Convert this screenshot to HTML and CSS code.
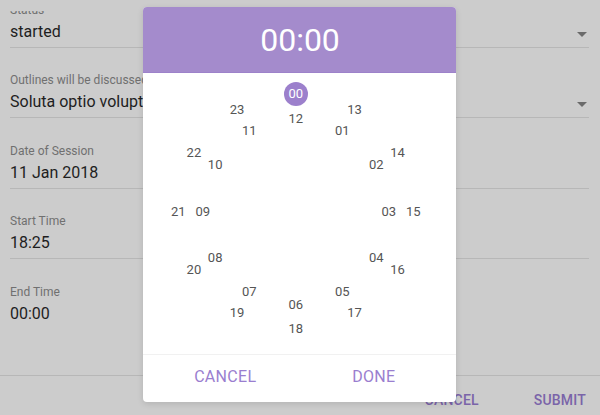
FILE: index.html
```html
<!DOCTYPE html>
<html>
<head>
<meta charset="utf-8">
<link rel="stylesheet" href="styles.css">
</head>
<body>
<div class="page">
  <div class="form-clip">
    <div class="form">
      <div class="field select">
        <div class="label">Status</div>
        <div class="value">started</div>
        <span class="arrow"></span>
      </div>
      <div class="field select">
        <div class="label">Outlines will be discussed</div>
        <div class="value">Soluta optio voluptatem</div>
        <span class="arrow"></span>
      </div>
      <div class="field">
        <div class="label">Date of Session</div>
        <div class="value">11 Jan 2018</div>
      </div>
      <div class="field">
        <div class="label">Start Time</div>
        <div class="value">18:25</div>
      </div>
      <div class="field">
        <div class="label">End Time</div>
        <div class="value">00:00</div>
      </div>
    </div>
  </div>
  <div class="footer">
    <button class="fbtn">Cancel</button>
    <button class="fbtn">Submit</button>
  </div>
</div>

<div class="dialog">
  <div class="dialog-head">00:00</div>
  <div class="dialog-body">
    <div class="clock">
      <span class="num sel" style="left:130px;top:12.5px">00</span>
      <span class="num" style="left:188.75px;top:28.24px">13</span>
      <span class="num" style="left:231.76px;top:71.25px">14</span>
      <span class="num" style="left:247.5px;top:130px">15</span>
      <span class="num" style="left:231.76px;top:188.75px">16</span>
      <span class="num" style="left:188.75px;top:231.76px">17</span>
      <span class="num" style="left:130px;top:247.5px">18</span>
      <span class="num" style="left:71.25px;top:231.76px">19</span>
      <span class="num" style="left:28.24px;top:188.75px">20</span>
      <span class="num" style="left:12.5px;top:130px">21</span>
      <span class="num" style="left:28.24px;top:71.25px">22</span>
      <span class="num" style="left:71.25px;top:28.24px">23</span>
      <span class="num" style="left:130px;top:37px">12</span>
      <span class="num" style="left:176.5px;top:49.46px">01</span>
      <span class="num" style="left:210.54px;top:83.5px">02</span>
      <span class="num" style="left:223px;top:130px">03</span>
      <span class="num" style="left:210.54px;top:176.5px">04</span>
      <span class="num" style="left:176.5px;top:210.54px">05</span>
      <span class="num" style="left:130px;top:223px">06</span>
      <span class="num" style="left:83.5px;top:210.54px">07</span>
      <span class="num" style="left:49.46px;top:176.5px">08</span>
      <span class="num" style="left:37px;top:130px">09</span>
      <span class="num" style="left:49.46px;top:83.5px">10</span>
      <span class="num" style="left:83.5px;top:49.46px">11</span>
    </div>
  </div>
  <div class="dialog-actions">
    <button class="dbtn">Cancel</button>
    <button class="dbtn">Done</button>
  </div>
</div>
</body>
</html>
```

FILE: styles.css
```css
* { box-sizing: border-box; }
html, body {
  margin: 0;
  padding: 0;
  width: 600px;
  height: 415px;
  overflow: hidden;
  background: #cccccc;
  font-family: Roboto, "Liberation Sans", Arial, sans-serif;
}
.page {
  width: 600px;
  height: 415px;
  display: flex;
  flex-direction: column;
}
.form-clip {
  margin-top: 11px;
  overflow: hidden;
  height: 317px;
}
.form {
  margin-top: -33px;
  padding: 0 11px 0 10px;
}
.field {
  position: relative;
  padding: 25px 0 5px;
  border-bottom: 1px solid #b7b7b7;
}
.field + .field + .field {
  padding-top: 25.5px;
}
.label {
  font-size: 12px;
  line-height: 14px;
  color: #707070;
  white-space: nowrap;
}
.value {
  margin-top: 5px;
  font-size: 16px;
  line-height: 20px;
  color: #1e1e1e;
  white-space: nowrap;
}
.arrow {
  position: absolute;
  right: 2px;
  top: 54px;
  width: 0;
  height: 0;
  border-left: 5px solid transparent;
  border-right: 5px solid transparent;
  border-top: 5px solid #6a6a6a;
}
.footer {
  margin-top: 47px;
  border-top: 1px solid #b7b7b7;
  display: flex;
  justify-content: flex-end;
  gap: 55px;
  padding: 14px 14px 0 0;
}
.fbtn {
  background: none;
  border: 0;
  padding: 0;
  font-family: Roboto, "Liberation Sans", Arial, sans-serif;
  font-size: 14px;
  font-weight: 500;
  line-height: 20px;
  text-transform: uppercase;
  color: #7a64a9;
  letter-spacing: 0.2px;
}
.dialog {
  position: absolute;
  left: 143px;
  top: 7px;
  width: 313px;
  height: 395px;
  background: #ffffff;
  border-radius: 4px;
  overflow: hidden;
  box-shadow: 0 2px 6px rgba(0,0,0,0.12);
  display: flex;
  flex-direction: column;
}
.dialog-head {
  height: 66px;
  background: #a48bcc;
  border-bottom: 1px solid #9d82ca;
  color: #ffffff;
  font-size: 32px;
  display: flex;
  align-items: center;
  justify-content: center;
  padding-left: 1px;
}
.dialog-body {
  height: 282px;
  border-bottom: 1px solid #f1f1f1;
}
.clock {
  position: relative;
  width: 260px;
  height: 260px;
  margin: 8.5px 0 0 22.7px;
}
.num {
  position: absolute;
  transform: translate(-50%, -50%);
  font-size: 13px;
  line-height: 16px;
  color: #555555;
}
.num.sel {
  width: 24px;
  height: 24px;
  line-height: 24px;
  border-radius: 50%;
  background: #9c80cc;
  color: #ffffff;
  text-align: center;
  margin-top: 0.3px;
}
.dialog-actions {
  flex: 1;
  display: grid;
  grid-template-columns: 1fr 1fr;
  align-items: center;
  padding: 0 8px 4px;
}
.dbtn {
  background: none;
  border: 0;
  padding: 0;
  font-family: Roboto, "Liberation Sans", Arial, sans-serif;
  font-size: 16px;
  line-height: 20px;
  text-transform: uppercase;
  color: #9a7ecf;
  letter-spacing: 0.3px;
  text-align: center;
}
```
